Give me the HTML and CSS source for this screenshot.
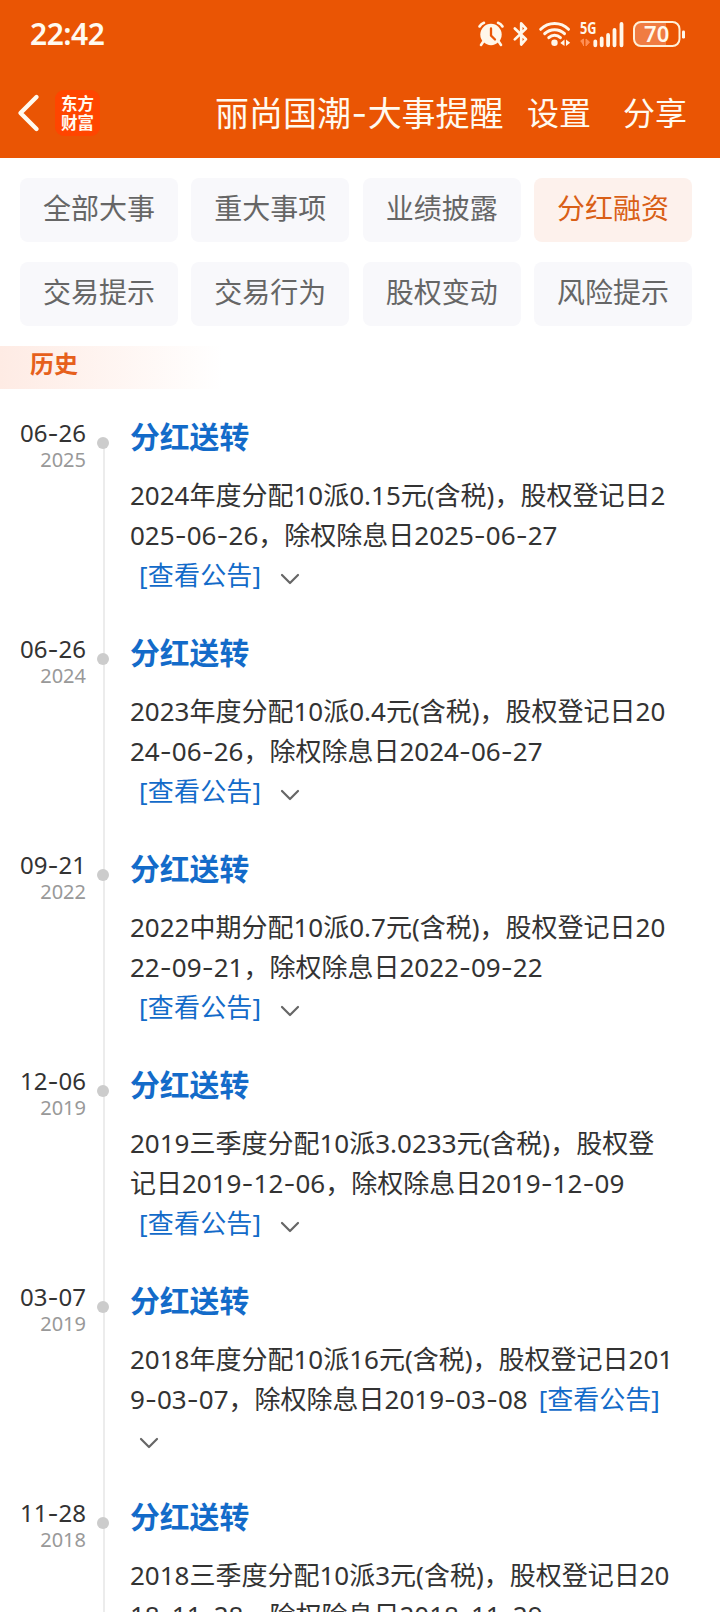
FILE: index.html
```html
<!DOCTYPE html>
<html lang="zh-CN">
<head>
<meta charset="utf-8">
<title>丽尚国潮-大事提醒</title>
<link rel="stylesheet" href="styles.css">
</head>
<body>
<div class="screen">
  <header class="header">
    <div class="status">
      <span class="clock">22:42</span>
      <div class="status-icons">
        <svg class="alarm" width="26" height="26" viewBox="0 0 26 26">
          <circle cx="13" cy="13.5" r="10.7" fill="#fff7ea"/>
          <path d="M1.5 5.5Q3 2.8 6 1.8M24.5 5.5Q23 2.8 20 1.8M5 21l-2 3M21 21l2 3" stroke="#fff7ea" stroke-width="2.6" stroke-linecap="round" fill="none"/>
          <path d="M13 7.5v7l4 4" stroke="#ea5504" stroke-width="2.3" stroke-linecap="round" fill="none"/>
        </svg>
        <svg class="bluetooth" width="16" height="26" viewBox="0 0 16 26">
          <path d="M1.8 7.5L13 18.2 8.2 23.6V2.3L13 7.6 1.8 18.4" stroke="#fff7ea" stroke-width="2.7" stroke-linecap="round" stroke-linejoin="round" fill="none"/>
        </svg>
        <svg class="wifi" width="32" height="26" viewBox="0 0 32 26">
          <path d="M1.7 8.3C9.5.6 21.7.6 29.5 8.3M5.7 12.7c5.6-5.4 14.2-5.4 19.8 0M9.8 16.6c3.3-3.1 8.3-3.1 11.6 0" stroke="#fff7ea" stroke-width="3" stroke-linecap="round" fill="none"/>
          <circle cx="15.5" cy="21.8" r="3.2" fill="#fff7ea"/>
          <path d="M25.5 18.5v6.5l-4.2-3zM27 18.5l4.2 3.2-4.2 3.3z" fill="#fff7ea"/>
        </svg>
        <svg class="signal" width="44" height="26" viewBox="0 0 44 26">
          <text class="net" x="0" y="13" textLength="16.5" lengthAdjust="spacingAndGlyphs">5G</text>
          <path d="M.5 20l3-2v7M6 18v7l3.5-4z" stroke="#ff8f55" stroke-width="1" fill="#ff8f55"/>
          <path d="M15.3 20.5v3.800M21.7 17.5v6.8M28.1 14v10.3M34.5 9v15.3M41.5 3v21.3" stroke="#fff7ea" stroke-width="3.8" stroke-linecap="round"/>
        </svg>
        <svg class="battery" width="53" height="28" viewBox="0 0 53 28">
          <path d="M8 1.5H33V26.5H8Q1 26.500 1 19.5V8.5Q1 1.500 8 1.5z" fill="#f07c42"/>
          <rect x="1" y="2" width="45.5" height="24" rx="7" fill="none" stroke="#fff0d8" stroke-width="2"/>
          <rect x="49" y="10.5" width="3" height="8" rx="1.2" fill="#fff7ea"/>
          <text class="charge" x="23.7" y="22" text-anchor="middle">70</text>
        </svg>
      </div>
    </div>
    <nav class="navbar">
      <svg class="back" width="24" height="40" viewBox="0 0 24 40">
        <path d="M20.500 4L4.500 20 20.500 36" stroke="#fffaf0" stroke-width="4.400" stroke-linecap="round" stroke-linejoin="round" fill="none"/>
      </svg>
      <div class="logo"><span>东方</span><span>财富</span></div>
      <h1 class="title">丽尚国潮<span class="dash">-</span>大事提醒</h1>
      <span class="action">设置</span>
      <span class="action share">分享</span>
    </nav>
  </header>

  <div class="tabs">
    <span class="tab">全部大事</span>
    <span class="tab">重大事项</span>
    <span class="tab">业绩披露</span>
    <span class="tab active">分红融资</span>
    <span class="tab">交易提示</span>
    <span class="tab">交易行为</span>
    <span class="tab">股权变动</span>
    <span class="tab">风险提示</span>
  </div>

  <div class="section">历史</div>

  <main class="timeline">
    <article class="event">
      <div class="when"><div class="day">06<span class="dash">-</span>26</div><div class="year">2025</div></div>
      <div class="rail"><i class="dot"></i></div>
      <div class="body">
        <h2>分红送转</h2>
        <p>2024年度分配10派0.15元(含税)，股权登记日2</p>
        <p>025<span class="dash">-</span>06<span class="dash">-</span>26，除权除息日2025<span class="dash">-</span>06<span class="dash">-</span>27</p>
        <p class="more"><a>[查看公告]</a><svg class="chev" width="20" height="12" viewBox="0 0 20 12"><path d="M2 2l8 8 8-8"/></svg></p>
      </div>
    </article>
    <article class="event">
      <div class="when"><div class="day">06<span class="dash">-</span>26</div><div class="year">2024</div></div>
      <div class="rail"><i class="dot"></i></div>
      <div class="body">
        <h2>分红送转</h2>
        <p>2023年度分配10派0.4元(含税)，股权登记日20</p>
        <p>24<span class="dash">-</span>06<span class="dash">-</span>26，除权除息日2024<span class="dash">-</span>06<span class="dash">-</span>27</p>
        <p class="more"><a>[查看公告]</a><svg class="chev" width="20" height="12" viewBox="0 0 20 12"><path d="M2 2l8 8 8-8"/></svg></p>
      </div>
    </article>
    <article class="event">
      <div class="when"><div class="day">09<span class="dash">-</span>21</div><div class="year">2022</div></div>
      <div class="rail"><i class="dot"></i></div>
      <div class="body">
        <h2>分红送转</h2>
        <p>2022中期分配10派0.7元(含税)，股权登记日20</p>
        <p>22<span class="dash">-</span>09<span class="dash">-</span>21，除权除息日2022<span class="dash">-</span>09<span class="dash">-</span>22</p>
        <p class="more"><a>[查看公告]</a><svg class="chev" width="20" height="12" viewBox="0 0 20 12"><path d="M2 2l8 8 8-8"/></svg></p>
      </div>
    </article>
    <article class="event">
      <div class="when"><div class="day">12<span class="dash">-</span>06</div><div class="year">2019</div></div>
      <div class="rail"><i class="dot"></i></div>
      <div class="body">
        <h2>分红送转</h2>
        <p>2019三季度分配10派3.0233元(含税)，股权登</p>
        <p>记日2019<span class="dash">-</span>12<span class="dash">-</span>06，除权除息日2019<span class="dash">-</span>12<span class="dash">-</span>09</p>
        <p class="more"><a>[查看公告]</a><svg class="chev" width="20" height="12" viewBox="0 0 20 12"><path d="M2 2l8 8 8-8"/></svg></p>
      </div>
    </article>
    <article class="event">
      <div class="when"><div class="day">03<span class="dash">-</span>07</div><div class="year">2019</div></div>
      <div class="rail"><i class="dot"></i></div>
      <div class="body">
        <h2>分红送转</h2>
        <p>2018年度分配10派16元(含税)，股权登记日201</p>
        <p>9<span class="dash">-</span>03<span class="dash">-</span>07，除权除息日2019<span class="dash">-</span>03<span class="dash">-</span>08<a class="inline">[查看公告]</a></p>
        <p class="more only"><svg class="chev" width="20" height="12" viewBox="0 0 20 12"><path d="M2 2l8 8 8-8"/></svg></p>
      </div>
    </article>
    <article class="event">
      <div class="when"><div class="day">11<span class="dash">-</span>28</div><div class="year">2018</div></div>
      <div class="rail"><i class="dot"></i></div>
      <div class="body">
        <h2>分红送转</h2>
        <p>2018三季度分配10派3元(含税)，股权登记日20</p>
        <p>18<span class="dash">-</span>11<span class="dash">-</span>28，除权除息日2018<span class="dash">-</span>11<span class="dash">-</span>29</p>
      </div>
    </article>
  </main>
</div>
</body>
</html>
```

FILE: styles.css
```css
* { box-sizing: border-box; margin: 0; padding: 0; }

body {
  background: #fff;
  font-family: "Noto Sans", "Noto Sans CJK SC", sans-serif;
  color: #333;
}

.screen {
  width: 720px;
  height: 1612px;
  overflow: hidden;
  display: flex;
  flex-direction: column;
}

.header {
  flex: none;
  height: 158px;
  background: #ea5504;
  color: #fffaf0;
}

.status {
  height: 68px;
  padding: 0 34px 0 30px;
  display: flex;
  align-items: center;
  justify-content: space-between;
}

.clock { font-size: 30px; font-weight: 600; line-height: 40px; letter-spacing: -0.5px; }
.status-icons { display: flex; align-items: center; }
.status-icons svg { overflow: visible; }
.bluetooth { margin-left: 9px; }
.wifi { margin-left: 10px; }
.signal { margin-left: 9px; }
.battery { margin-left: 9px; }
.net { font-size: 16px; font-weight: 700; fill: #fff7ea; }
.charge { font-size: 22px; font-weight: 600; fill: #fff7ea; }

.navbar {
  height: 90px;
  padding-left: 16px;
  display: flex;
  align-items: center;
  line-height: 48px;
}

.logo {
  width: 45px;
  height: 46px;
  margin-left: 15px;
  border-radius: 9px;
  background: #ff4500;
  display: flex;
  flex-direction: column;
  align-items: center;
  justify-content: center;
  font-size: 16.5px;
  font-weight: 700;
  line-height: 19.5px;
}

.title { margin-left: 115px; font-size: 34px; font-weight: 400; white-space: nowrap; width: 288px; }
.action { font-size: 32px; margin-left: 24px; }
.share { margin-left: 32px; }

.dash {
  display: inline-block;
  width: 0.465em;
  text-align: center;
  font-family: Inter, sans-serif;
  line-height: 1;
}

.title .dash { width: 0.489em; }

.tabs {
  flex: none;
  padding: 20px 28px 20px 20px;
  display: grid;
  grid-template-columns: repeat(4, 158px);
  justify-content: space-between;
  row-gap: 20px;
}

.tab {
  height: 64px;
  padding-bottom: 4px;
  border-radius: 8px;
  background: #f8f8fb;
  color: #666;
  font-size: 28px;
  line-height: 60px;
  text-align: center;
}

.tab.active { background: #fdf1ec; color: #d95f17; }

.section {
  flex: none;
  width: 222px;
  height: 43px;
  padding-left: 30px;
  background: linear-gradient(90deg, #feebe4, #fff);
  color: #e6601c;
  font-size: 24px;
  font-weight: 700;
  line-height: 36px;
}

.timeline { padding-top: 28px; }

.event {
  height: 216px;
  display: grid;
  grid-template-columns: 87px 35px 1fr;
}

.when { text-align: right; white-space: nowrap; padding-right: 1px; }
.day { font-size: 24px; line-height: 32px; }
.year { font-size: 20px; line-height: 22px; color: #999; }

.rail {
  padding: 20px 0 0 10px;
  background: linear-gradient(#ececec, #ececec) 16px 0 / 2px 100% no-repeat;
}

.event:first-child .rail { background-position: 16px 26px; }
.dot { display: block; width: 12px; height: 12px; border-radius: 50%; background: #ccc; }

.body { padding-left: 8px; white-space: nowrap; }
.body h2 { height: 58px; font-size: 29.8px; line-height: 40px; font-weight: 700; color: #136bc9; }
.body p { height: 40px; font-size: 26px; line-height: 40px; }
.body a { color: #136bc9; }
.body .inline { margin-left: 11px; }

.body .more { display: flex; align-items: center; padding-left: 9px; }
.more a { letter-spacing: 0.2px; }
.chev { margin: 7px 0 0 19px; fill: none; stroke: #666; stroke-width: 2.2; stroke-linecap: round; stroke-linejoin: round; }
.only .chev { margin: 8px 0 0 0; }
```
